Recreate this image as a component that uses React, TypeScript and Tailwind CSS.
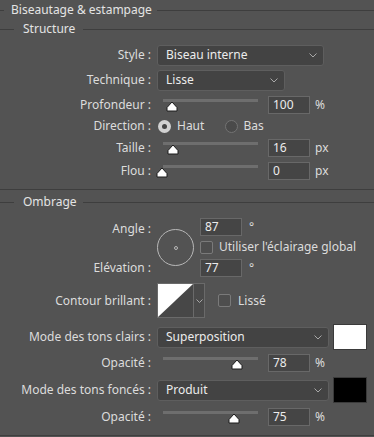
import React from 'react';

const Line = ({ className = '' }: { className?: string }) => <div className={`h-px bg-[#3e3e3e] ${className}`} />;

const Chevron = () => (
  <svg width="8" height="5" viewBox="0 0 8 5" className="shrink-0">
    <polyline points="0.5,0.5 4,4 7.5,0.5" fill="none" stroke="#a8a8a8" strokeWidth="1" />
  </svg>
);

const Label = ({ children }: { children: React.ReactNode }) => (
  <div className="w-[152px] shrink-0 text-right whitespace-nowrap pr-px">{children}</div>
);

const Select = ({ value, w }: { value: string; w: string }) => (
  <div className={`ml-[5px] h-[21px] ${w} rounded-[3px] border border-[#5e5e5e] bg-[#434343] flex items-center justify-between pl-[8px] pr-[6px] text-[#ececec]`}>
    <span>{value}</span>
    <Chevron />
  </div>
);

const Thumb = ({ left }: { left: number }) => (
  <svg width="12" height="11" viewBox="0 0 12 11" className="absolute top-[7px]" style={{ left: left - 6 }}>
    <path d="M1 10 L1 6.5 L6 1 L11 6.5 L11 10 Z" fill="#ffffff" stroke="#1c1c1c" strokeWidth="1" strokeLinejoin="round" />
  </svg>
);

const Field = ({ value }: { value: string }) => (
  <div className="w-[42px] h-[18px] border border-[#686868] bg-[#454545] pl-[4px] leading-[16px] text-[#ececec]">{value}</div>
);

const SliderRow = ({ label, pos, value, unit, cls = '' }: { label: string; pos: number; value: string; unit: string; cls?: string }) => (
  <div className={`flex items-center h-[22px] ${cls}`}>
    <Label>{label}</Label>
    <div className="relative w-[95px] h-[22px] ml-[11px] mr-[10px]">
      <div className="absolute left-0 right-0 top-[5px] h-[3px] bg-[#6e6e6e]" />
      <Thumb left={pos} />
    </div>
    <Field value={value} />
    <span className="ml-[5px]">{unit}</span>
  </div>
);

const Checkbox = () => <div className="w-[13px] h-[13px] rounded-[2px] border border-[#7a7a7a] bg-[#4e4e4e] shrink-0" />;

const Swatch = ({ color }: { color: string }) => (
  <div className={`ml-[4px] w-[34px] h-[26px] border border-[#3a3a3a] ${color}`} />
);

export default function App() {
  return (
    <div className="w-[374px] h-[437px] bg-[#535353] text-[#dcdcdc] text-[12px] overflow-hidden" style={{ fontFamily: '"Noto Sans", "Open Sans", sans-serif' }}>
      <div className="flex items-center h-[20px]">
        <Line className="w-[4px]" />
        <span className="ml-[7px] mr-[5px] text-[#e4e4e4]">Biseautage &amp; estampage</span>
        <Line className="flex-1" />
      </div>
      <div className="flex items-center h-[18px]">
        <Line className="w-[14px]" />
        <span className="ml-[9px] mr-[8px] text-[#e4e4e4]">Structure</span>
        <Line className="flex-1" />
      </div>

      <div className="flex items-center h-[22px] mt-[6px]">
        <Label>Style :</Label>
        <Select value="Biseau interne" w="w-[167px]" />
      </div>
      <div className="flex items-center h-[22px] mt-[3px]">
        <Label>Technique :</Label>
        <Select value="Lisse" w="w-[128px]" />
      </div>
      <SliderRow label="Profondeur :" pos={9} value="100" unit="%" cls="mt-[3px]" />
      <div className="flex items-center h-[20px]">
        <Label>Direction :</Label>
        <div className="ml-[6px] w-[13px] h-[13px] rounded-full bg-[#d2d2d2] flex items-center justify-center">
          <div className="w-[5px] h-[5px] rounded-full bg-[#444]" />
        </div>
        <span className="ml-[6px]">Haut</span>
        <div className="ml-[21px] w-[13px] h-[13px] rounded-full border border-[#737373] bg-[#4a4a4a]" />
        <span className="ml-[5px]">Bas</span>
      </div>
      <SliderRow label="Taille :" pos={10} value="16" unit="px" cls="mt-[1px]" />
      <SliderRow label="Flou :" pos={-1} value="0" unit="px" cls="mt-px" />

      <Line className="mt-[7px]" />
      <div className="flex items-center h-[18px] mt-[3px]">
        <Line className="w-[14px]" />
        <span className="ml-[9px] mr-[6px] text-[#e4e4e4]">Ombrage</span>
        <Line className="flex-1" />
      </div>

      <div className="flex h-[62px] mt-[6px]">
        <div className="w-[152px] shrink-0 flex flex-col justify-between text-right pr-px">
          <div className="h-[24px] flex items-center justify-end">Angle :</div>
          <div className="h-[22px] flex items-center justify-end">Elévation :</div>
        </div>
        <div className="ml-[5px] mt-[12px] w-[37px] h-[37px] rounded-full border border-[#b8b8b8] flex items-center justify-center shrink-0">
          <div className="w-[4px] h-[4px] rounded-full border border-[#b8b8b8]" />
        </div>
        <div className="ml-[6px] flex flex-col">
          <div className="flex items-center h-[20px]">
            <Field value="87" />
            <span className="ml-[7px] self-start mt-[1px]">°</span>
          </div>
          <div className="flex items-center h-[20px]">
            <Checkbox />
            <span className="ml-[6px]">Utiliser l'éclairage global</span>
          </div>
          <div className="flex items-center h-[22px]">
            <Field value="77" />
            <span className="ml-[7px] self-start mt-[2px]">°</span>
          </div>
        </div>
      </div>

      <div className="flex items-center h-[35px] mt-[4px]">
        <Label>Contour brillant :</Label>
        <div className="ml-[5px] flex h-[35px] border border-[#6a6a6a]">
          <svg width="35" height="33" viewBox="0 0 35 33" className="block">
            <rect width="35" height="33" fill="#474747" />
            <polygon points="0,0 35,0 0,33" fill="#ffffff" />
          </svg>
          <div className="w-[11px] border-l border-[#6a6a6a] bg-[#4a4a4a] flex items-center justify-center">
            <svg width="7" height="4" viewBox="0 0 7 4">
              <polyline points="0.5,0.5 3.5,3.5 6.5,0.5" fill="none" stroke="#a8a8a8" strokeWidth="1" />
            </svg>
          </div>
        </div>
        <div className="ml-[13px]"><Checkbox /></div>
        <span className="ml-[7px]">Lissé</span>
      </div>

      <div className="flex items-center h-[28px] mt-[5px]">
        <Label>Mode des tons clairs :</Label>
        <Select value="Superposition" w="w-[172px]" />
        <Swatch color="bg-white" />
      </div>
      <SliderRow label="Opacité :" pos={74} value="78" unit="%" cls="mt-px" />
      <div className="flex items-center h-[28px] mt-[2px]">
        <Label>Mode des tons foncés :</Label>
        <Select value="Produit" w="w-[172px]" />
        <Swatch color="bg-black" />
      </div>
      <SliderRow label="Opacité :" pos={71} value="75" unit="%" cls="mt-[2px]" />
      <Line className="mt-[7px]" />
    </div>
  );
}
